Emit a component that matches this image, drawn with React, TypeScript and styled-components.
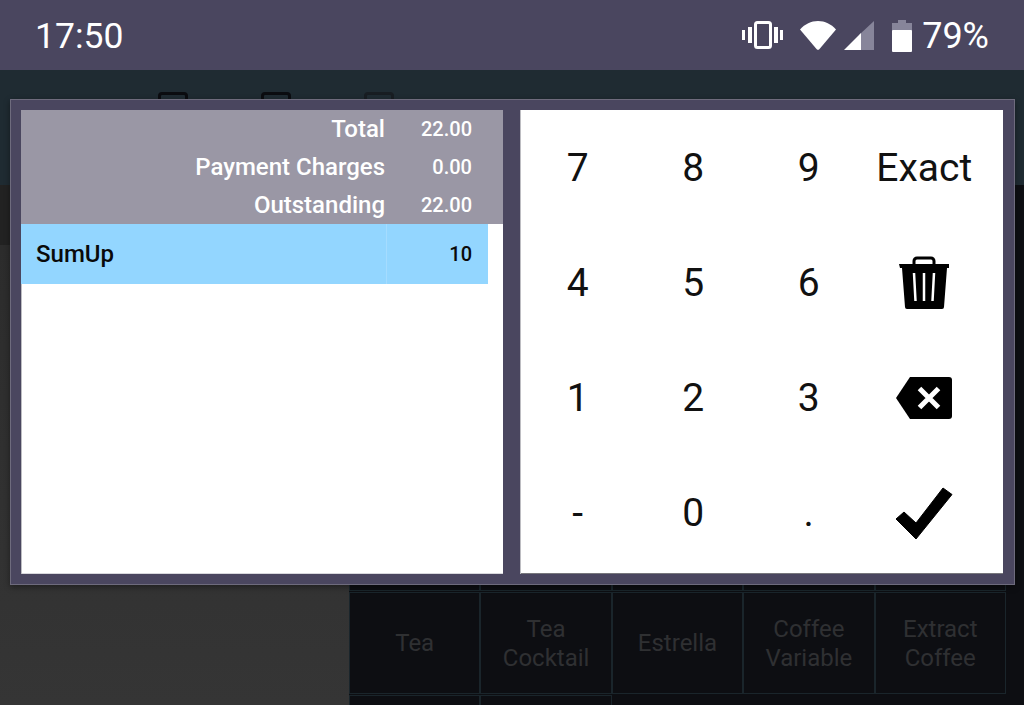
import React from 'react';
import styled, { createGlobalStyle } from 'styled-components';

const GlobalStyle = createGlobalStyle`
  html, body {
    margin: 0;
    padding: 0;
    width: 1024px;
    height: 705px;
    overflow: hidden;
    background: #363636;
    font-family: Roboto, "Liberation Sans", sans-serif;
  }
`;

const Screen = styled.div`
  position: relative;
  width: 1024px;
  height: 705px;
  display: flex;
  flex-direction: column;
  overflow: hidden;
`;

const StatusBar = styled.div`
  height: 70px;
  flex: none;
  display: flex;
  align-items: center;
  justify-content: space-between;
  padding: 0 35px 0 35px;
  box-sizing: border-box;
  background: #4a465f;
  color: #fff;
`;

const Clock = styled.div`
  font-size: 35.500px;
  padding-top: 2px;
`;

const StatusIcons = styled.div`
  display: flex;
  align-items: center;
`;

const Percent = styled.div`
  font-size: 36px;
  margin-left: 10px;
  padding-top: 2px;
`;

const TopBar = styled.div`
  height: 115px;
  flex: none;
  background: #1f2b32;
  display: flex;
  gap: 73px;
  padding: 22px 0 0 158px;
  box-sizing: border-box;
`;

const TopIcon = styled.div<{ $dim?: boolean }>`
  width: 30px;
  height: 30px;
  box-sizing: border-box;
  border: 3px solid ${p => (p.$dim ? '#181d22' : '#0b0c10')};
  border-radius: 4px;
`;

const Body = styled.div`
  flex: 1;
  min-height: 0;
  display: flex;
`;

const SideColumn = styled.div`
  width: 349px;
  flex: none;
  background: linear-gradient(#222222 0, #222222 60px, #2c2c2c 60px, #353535 520px);
`;

const MenuGrid = styled.div`
  flex: 1;
  overflow: hidden;
  background: #0d0e12;
  padding: 304px 18px 0 0;
  display: grid;
  grid-template-columns: repeat(5, 131.4px);
  grid-auto-rows: 102px;
  row-gap: 1px;
  align-content: start;
`;

const MenuCell = styled.div`
  box-sizing: border-box;
  border: 1px solid #1a252b;
  padding-top: 1px;
  display: flex;
  align-items: center;
  justify-content: center;
  text-align: center;
  color: #2f3032;
  font-size: 24px;
  line-height: 29px;
`;

const Dialog = styled.div`
  position: absolute;
  left: 10px;
  top: 99px;
  width: 1005px;
  height: 486px;
  box-sizing: border-box;
  padding: 10px 11px 10px 10px;
  background: #4a465f;
  border: 1px solid #6e6b7d;
  box-shadow: 0 2px 6px rgba(0, 0, 0, 0.4);
  display: flex;
  gap: 17px;
`;

const PaymentPanel = styled.div`
  width: 482px;
  flex: none;
  background: #fff;
  box-shadow: inset 1px 0 0 #bdbdc2, inset 0 -1px 0 #d8d8dc;
  display: flex;
  flex-direction: column;
`;

const Summary = styled.div`
  height: 114px;
  flex: none;
  background: #9a97a5;
  color: #fff;
`;

const SummaryRow = styled.div`
  height: 38px;
  display: flex;
  align-items: center;
  justify-content: flex-end;
  font-weight: 500;
`;

const SummaryLabel = styled.div`
  font-size: 24px;
  margin-top: -1px;
`;

const SummaryValue = styled.div`
  width: 87px;
  padding-right: 31px;
  text-align: right;
  font-size: 20px;
  margin-top: -1px;
`;

const TenderRow = styled.div`
  width: 467px;
  height: 60px;
  display: flex;
  align-items: center;
  background: #93d6ff;
  color: #0a0a0a;
  font-weight: 500;
`;

const TenderName = styled.div`
  width: 366px;
  height: 100%;
  display: flex;
  align-items: center;
  box-sizing: border-box;
  padding-left: 15px;
  font-size: 24px;
  border-right: 1px solid #a5dcff;
`;

const TenderAmount = styled.div`
  flex: 1;
  padding-right: 16px;
  text-align: right;
  font-size: 20px;
`;

const Keypad = styled.div`
  flex: 1;
  background: #fff;
  box-shadow: inset 1px 0 0 #bdbdc2, inset 0 -1px 0 #77777c;
  box-sizing: border-box;
  padding: 0 21px 3px 0;
  display: grid;
  grid-template-columns: repeat(4, 115.5px);
  grid-template-rows: repeat(4, 1fr);
`;

const Key = styled.div`
  display: flex;
  align-items: center;
  justify-content: center;
  color: #111;
  font-size: 39px;
`;

const VibrateIcon = () => (
  <svg width="41" height="28" viewBox="0 0 41 28" fill="none">
    <rect x="13.500" y="1.500" width="15" height="25" rx="2" stroke="#fff" strokeWidth="3" />
    <path d="M8 6v16M34 6v16" stroke="#fff" strokeWidth="4" />
    <path d="M1.500 9v10M39.500 9v10" stroke="#fff" strokeWidth="3" />
  </svg>
);

const WifiIcon = () => (
  <svg width="38" height="31" viewBox="0 0 38 31" style={{ marginLeft: 16 }}>
    <path d="M1 9.500C6 4 12 1 19 1s13 3 18 8.500L20.500 29a2 2 0 0 1-3 0Z" fill="#fff" />
  </svg>
);

const SignalIcon = () => (
  <svg width="31" height="31" viewBox="0 0 31 31" style={{ marginLeft: 7 }}>
    <path d="M30 1v29H15V15Z" fill="#87859a" />
    <path d="M17 13v17H0Z" fill="#fff" />
  </svg>
);

const BatteryIcon = () => (
  <svg width="20" height="33" viewBox="0 0 20 33" style={{ marginLeft: 17 }}>
    <path d="M0 4h6V1h8v3h6v8H0Z" fill="#87859a" />
    <rect x="0" y="11" width="20" height="22" rx="1" fill="#fff" />
  </svg>
);

const TrashIcon = () => (
  <svg width="50" height="54" viewBox="0 0 50 54">
    <path d="M15 8V5a3 3 0 0 1 3-3h14a3 3 0 0 1 3 3v3" fill="none" stroke="#000" strokeWidth="3" />
    <path d="M0 8h50v4h-2l-3 39a2 2 0 0 1-2 2H8a2 2 0 0 1-2-2L3 12H1Z" fill="#000" />
    <path d="M15 17l1.500 28M25 17v28M35 17l-1.500 28" stroke="#fff" strokeWidth="2.500" />
  </svg>
);

const BackspaceIcon = () => (
  <svg width="56" height="42" viewBox="0 0 56 42">
    <path d="M14 0h39a3 3 0 0 1 3 3v36a3 3 0 0 1-3 3H14L0 21Z" fill="#000" />
    <path d="M23.500 11.500l19 19M42.500 11.500l-19 19" stroke="#fff" strokeWidth="5" />
  </svg>
);

const CheckIcon = () => (
  <svg width="58" height="54" viewBox="0 0 58 54">
    <path d="M1 33l8-7 12 11L48 2l9 6.500L21 53Z" fill="#000" stroke="#000" strokeWidth="1" strokeLinejoin="round" />
  </svg>
);

const summaryRows = [
  { label: 'Total', value: '22.00' },
  { label: 'Payment Charges', value: '0.00' },
  { label: 'Outstanding', value: '22.00' },
];

const menuItems = ['', '', '', '', '', 'Tea', 'Tea\nCocktail', 'Estrella', 'Coffee\nVariable', 'Extract\nCoffee', '', ''];

const App = () => (
  <Screen>
    <GlobalStyle />
    <StatusBar>
      <Clock>17:50</Clock>
      <StatusIcons>
        <VibrateIcon />
        <WifiIcon />
        <SignalIcon />
        <BatteryIcon />
        <Percent>79%</Percent>
      </StatusIcons>
    </StatusBar>
    <TopBar>
      <TopIcon />
      <TopIcon />
      <TopIcon $dim />
    </TopBar>
    <Body>
      <SideColumn />
      <MenuGrid>
        {menuItems.map((text, i) => (
          <MenuCell key={i}>
            <span>
              {text.split('\n').map((line, j) => (
                <div key={j}>{line}</div>
              ))}
            </span>
          </MenuCell>
        ))}
      </MenuGrid>
    </Body>
    <Dialog>
      <PaymentPanel>
        <Summary>
          {summaryRows.map(row => (
            <SummaryRow key={row.label}>
              <SummaryLabel>{row.label}</SummaryLabel>
              <SummaryValue>{row.value}</SummaryValue>
            </SummaryRow>
          ))}
        </Summary>
        <TenderRow>
          <TenderName>SumUp</TenderName>
          <TenderAmount>10</TenderAmount>
        </TenderRow>
      </PaymentPanel>
      <Keypad>
        <Key>7</Key>
        <Key>8</Key>
        <Key>9</Key>
        <Key>Exact</Key>
        <Key>4</Key>
        <Key>5</Key>
        <Key>6</Key>
        <Key><TrashIcon /></Key>
        <Key>1</Key>
        <Key>2</Key>
        <Key>3</Key>
        <Key><BackspaceIcon /></Key>
        <Key>-</Key>
        <Key>0</Key>
        <Key>.</Key>
        <Key><CheckIcon /></Key>
      </Keypad>
    </Dialog>
  </Screen>
);

export default App;
